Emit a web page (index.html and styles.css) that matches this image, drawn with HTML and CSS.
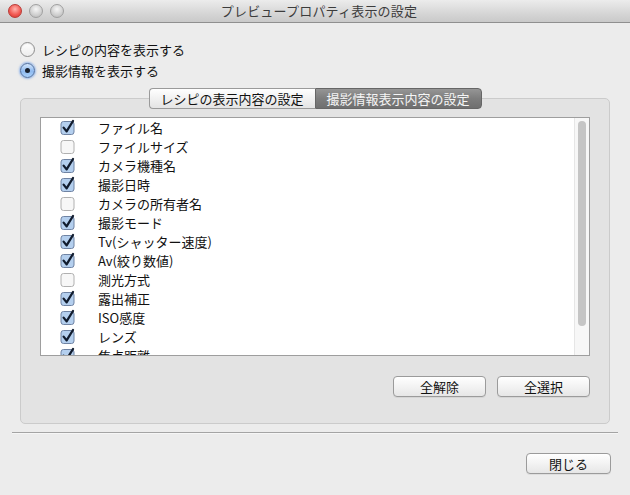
FILE: index.html
```html
<!DOCTYPE html>
<html lang="ja">
<head>
<meta charset="utf-8">
<title>プレビュープロパティ表示の設定</title>
<link rel="stylesheet" href="styles.css">
</head>
<body>
<div class="window">
  <div class="titlebar">
    <div class="lights">
      <span class="light red"></span>
      <span class="light"></span>
      <span class="light"></span>
    </div>
    <div class="title">プレビュープロパティ表示の設定</div>
  </div>
  <div class="content">
    <div class="radios">
      <label class="radio-row"><span class="radio"></span><span>レシピの内容を表示する</span></label>
      <label class="radio-row"><span class="radio on"><span class="dot"></span></span><span>撮影情報を表示する</span></label>
    </div>
    <div class="tabs">
      <span class="tab">レシピの表示内容の設定</span>
      <span class="tab active">撮影情報表示内容の設定</span>
    </div>
    <div class="tabbox">
      <div class="list">
        <div class="rows">
          <div class="row"><svg class="cb" viewBox="0 0 15 15"><rect class="box-on" x="1" y="1.5" width="13" height="13" rx="2.5"/><path class="tick" d="M3.6 7.6 L6.6 11.4 L13 1"/></svg><span>ファイル名</span></div>
          <div class="row"><svg class="cb" viewBox="0 0 15 15"><rect class="box-off" x="1" y="1.5" width="13" height="13" rx="2.5"/></svg><span>ファイルサイズ</span></div>
          <div class="row"><svg class="cb" viewBox="0 0 15 15"><rect class="box-on" x="1" y="1.5" width="13" height="13" rx="2.5"/><path class="tick" d="M3.6 7.6 L6.6 11.4 L13 1"/></svg><span>カメラ機種名</span></div>
          <div class="row"><svg class="cb" viewBox="0 0 15 15"><rect class="box-on" x="1" y="1.5" width="13" height="13" rx="2.5"/><path class="tick" d="M3.6 7.6 L6.6 11.4 L13 1"/></svg><span>撮影日時</span></div>
          <div class="row"><svg class="cb" viewBox="0 0 15 15"><rect class="box-off" x="1" y="1.5" width="13" height="13" rx="2.5"/></svg><span>カメラの所有者名</span></div>
          <div class="row"><svg class="cb" viewBox="0 0 15 15"><rect class="box-on" x="1" y="1.5" width="13" height="13" rx="2.5"/><path class="tick" d="M3.6 7.6 L6.6 11.4 L13 1"/></svg><span>撮影モード</span></div>
          <div class="row"><svg class="cb" viewBox="0 0 15 15"><rect class="box-on" x="1" y="1.5" width="13" height="13" rx="2.5"/><path class="tick" d="M3.6 7.6 L6.6 11.4 L13 1"/></svg><span>Tv(シャッター速度)</span></div>
          <div class="row"><svg class="cb" viewBox="0 0 15 15"><rect class="box-on" x="1" y="1.5" width="13" height="13" rx="2.5"/><path class="tick" d="M3.6 7.6 L6.6 11.4 L13 1"/></svg><span>Av(絞り数値)</span></div>
          <div class="row"><svg class="cb" viewBox="0 0 15 15"><rect class="box-off" x="1" y="1.5" width="13" height="13" rx="2.5"/></svg><span>測光方式</span></div>
          <div class="row"><svg class="cb" viewBox="0 0 15 15"><rect class="box-on" x="1" y="1.5" width="13" height="13" rx="2.5"/><path class="tick" d="M3.6 7.6 L6.6 11.4 L13 1"/></svg><span>露出補正</span></div>
          <div class="row"><svg class="cb" viewBox="0 0 15 15"><rect class="box-on" x="1" y="1.5" width="13" height="13" rx="2.5"/><path class="tick" d="M3.6 7.6 L6.6 11.4 L13 1"/></svg><span>ISO感度</span></div>
          <div class="row"><svg class="cb" viewBox="0 0 15 15"><rect class="box-on" x="1" y="1.5" width="13" height="13" rx="2.5"/><path class="tick" d="M3.6 7.6 L6.6 11.4 L13 1"/></svg><span>レンズ</span></div>
          <div class="row"><svg class="cb" viewBox="0 0 15 15"><rect class="box-on" x="1" y="1.5" width="13" height="13" rx="2.5"/><path class="tick" d="M3.6 7.6 L6.6 11.4 L13 1"/></svg><span>焦点距離</span></div>
        </div>
        <div class="scrolltrack"><div class="thumb"></div></div>
      </div>
      <div class="box-buttons">
        <button class="btn">全解除</button>
        <button class="btn">全選択</button>
      </div>
    </div>
    <div class="separator"></div>
    <div class="footer">
      <button class="btn close">閉じる</button>
    </div>
  </div>
</div>
</body>
</html>
```

FILE: styles.css
```css
html, body {
  margin: 0;
  padding: 0;
}
body {
  font-family: "Noto Sans CJK JP", "Noto Sans", sans-serif;
  font-size: 13px;
  color: #111;
  background: #ececec;
}
.window {
  width: 630px;
  height: 495px;
  background: #ececec;
  overflow: hidden;
}
.titlebar {
  height: 22px;
  border-bottom: 1px solid #8f8f8f;
  background: linear-gradient(#ececec, #d6d6d6 60%, #c9c9c9);
  display: flex;
  align-items: center;
}
.lights {
  display: flex;
  gap: 7px;
  padding-left: 8px;
}
.light {
  width: 12px;
  height: 12px;
  border-radius: 50%;
  border: 0.5px solid #a0a0a0;
  background: radial-gradient(circle at 50% 35%, #f6f6f6, #cfcfcf 60%, #b5b5b5);
}
.light.red {
  border-color: #b93a36;
  background: radial-gradient(circle at 50% 35%, #ffb3ad, #f25c55 55%, #d2302a);
}
.title {
  flex: 1;
  text-align: center;
  color: #3c3c3c;
  font-size: 13px;
  line-height: 22px;
  margin-left: -56px;
  letter-spacing: 0.2px;
}
.content {
  padding: 16px 20px 0 20px;
}
.radios {
  display: flex;
  flex-direction: column;
}
.radio-row {
  display: flex;
  align-items: center;
  height: 21px;
  gap: 7px;
}
.radio {
  width: 13px;
  height: 13px;
  border-radius: 50%;
  border: 1px solid #8d8d8d;
  background: linear-gradient(#ffffff, #ececec);
  box-shadow: inset 0 1px 1px rgba(0,0,0,0.08);
  display: flex;
  align-items: center;
  justify-content: center;
}
.radio.on {
  border-color: #4d6d9f;
  background: linear-gradient(#d3e6fb, #8fbaf0 55%, #a9d0fa);
  box-shadow: 0 0 2px 1px rgba(80,140,230,0.55);
}
.dot {
  width: 5px;
  height: 5px;
  border-radius: 50%;
  background: #18202e;
}
.tabs {
  margin-top: 7px;
  display: flex;
  justify-content: center;
  position: relative;
  z-index: 1;
}
.tab {
  height: 19px;
  line-height: 19px;
  width: 165px;
  text-align: center;
  border: 1px solid #9a9a9a;
  background: linear-gradient(#ffffff, #f1f1f1 50%, #e4e4e4);
  font-size: 13px;
  color: #111;
}
.tab:first-child {
  border-radius: 4px 0 0 4px;
  border-right: none;
}
.tab.active {
  border-radius: 0 4px 4px 0;
  border-color: #666;
  background: linear-gradient(#959595, #7d7d7d 50%, #6f6f6f);
  color: #f5f5f5;
}
.tabbox {
  margin-top: -11px;
  border: 1px solid #cbcbcb;
  border-radius: 5px;
  background: #e3e3e3;
  padding: 18px 19px 26px 19px;
}
.list {
  height: 237px;
  border: 1px solid #9e9e9e;
  background: #fff;
  display: flex;
  overflow: hidden;
}
.rows {
  flex: 1;
  display: flex;
  flex-direction: column;
}
.row {
  display: flex;
  align-items: center;
  height: 19px;
  flex: none;
  padding-left: 19px;
  white-space: nowrap;
}
.row span {
  margin-left: 23px;
  line-height: 19px;
}
.cb {
  width: 15px;
  height: 15px;
  flex: none;
  overflow: visible;
}
.box-on {
  fill: #b4cfee;
  stroke: #6f83a3;
  stroke-width: 1;
}
.box-off {
  fill: #f7f7f7;
  stroke: #b0b0b0;
  stroke-width: 1;
}
.tick {
  fill: none;
  stroke: #111c2e;
  stroke-width: 2.3;
  stroke-linecap: round;
  stroke-linejoin: round;
}
.scrolltrack {
  width: 14px;
  flex: none;
  background: #f7f7f7;
  border-left: 1px solid #e6e6e6;
  display: flex;
  justify-content: center;
}
.thumb {
  width: 8px;
  height: 205px;
  margin-top: 3px;
  border-radius: 4px;
  background: #c5c5c5;
}
.box-buttons {
  display: flex;
  justify-content: flex-end;
  gap: 11px;
  margin-top: 20px;
}
.btn {
  font-family: "Noto Sans CJK JP", "Noto Sans", sans-serif;
  font-size: 13px;
  color: #111;
  width: 93px;
  height: 21px;
  padding: 0;
  line-height: 19px;
  border: 1px solid #9b9b9b;
  border-radius: 4px;
  background: linear-gradient(#ffffff, #f3f3f3 50%, #e6e6e6);
  box-shadow: 0 1px 0 rgba(0,0,0,0.06);
}
.separator {
  margin: 8px -8px 0 -8px;
  height: 1px;
  background: #a4a4a4;
  border-bottom: 1px solid #f6f6f6;
}
.footer {
  display: flex;
  justify-content: flex-end;
  margin-top: 19px;
  margin-right: -1px;
}
.btn.close {
  width: 85px;
  height: 21px;
}
```
